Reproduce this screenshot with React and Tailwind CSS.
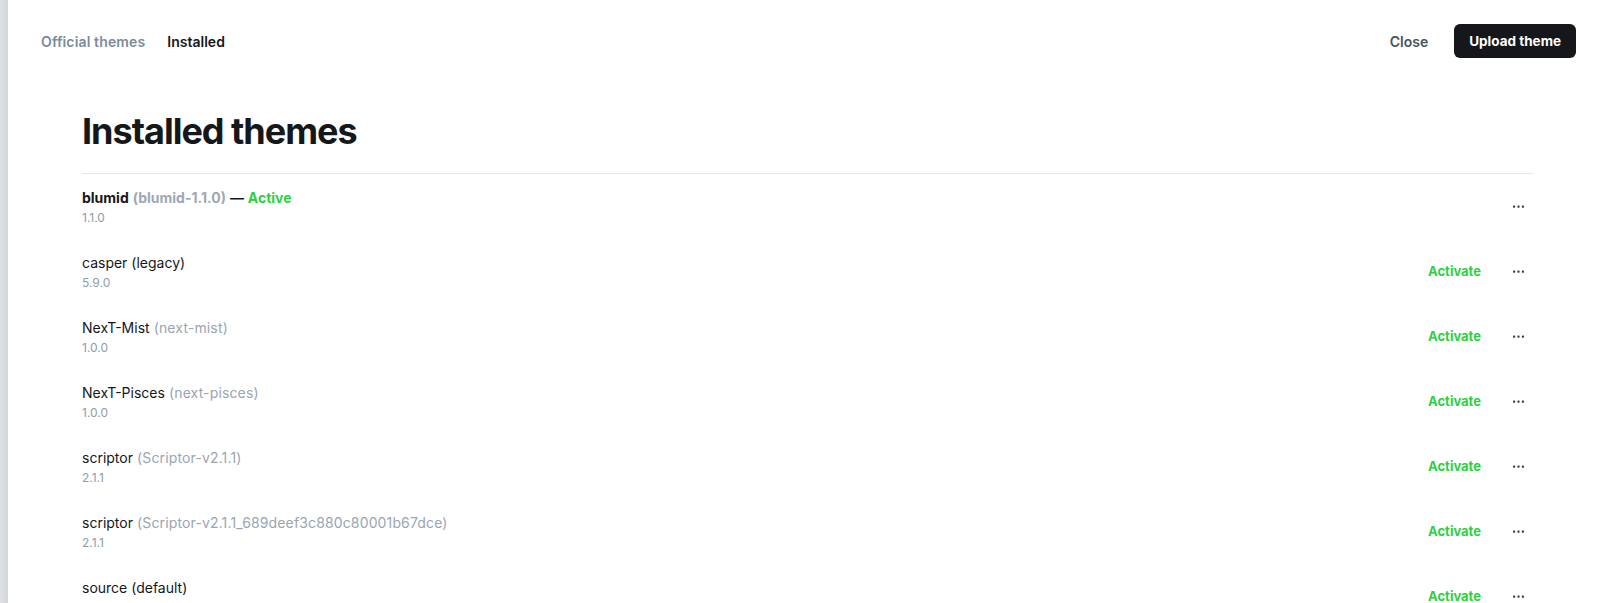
import React from "react";

const themes = [
  { name: "blumid", slug: "blumid-1.1.0", version: "1.1.0", active: true },
  { name: "casper (legacy)", version: "5.9.0" },
  { name: "NexT-Mist", slug: "next-mist", version: "1.0.0" },
  { name: "NexT-Pisces", slug: "next-pisces", version: "1.0.0" },
  { name: "scriptor", slug: "Scriptor-v2.1.1", version: "2.1.1" },
  { name: "scriptor", slug: "Scriptor-v2.1.1_689deef3c880c80001b67dce", version: "2.1.1" },
  { name: "source (default)", version: "1.5.0" },
];

const Dots = () => (
  <svg width="11" height="3" viewBox="0 0 11 3" fill="#394047">
    <rect x="0" y="0.5" width="2.2" height="2.2" rx="0.6" />
    <rect x="4.4" y="0.5" width="2.2" height="2.2" rx="0.6" />
    <rect x="8.8" y="0.5" width="2.2" height="2.2" rx="0.6" />
  </svg>
);

const ThemeRow = ({ theme }) => (
  <div className="h-[65px] flex items-center justify-between">
    <div className="flex flex-col">
      <div className="text-[14px] leading-[20px] text-[#15171a]">
        {theme.active ? (
          <>
            <span className="font-bold">{theme.name}</span>{" "}
            <span className="font-bold text-[#9ea8b3]">({theme.slug})</span>{" "}
            <span className="font-semibold">—</span>{" "}
            <span className="font-bold text-[#30cf43]">Active</span>
          </>
        ) : (
          <>
            {theme.name}
            {theme.slug && (
              <span className="text-[#9aa5b1] tracking-[0.01em]"> ({theme.slug})</span>
            )}
          </>
        )}
      </div>
      <div className="mt-[1px] text-[12px] leading-[17px] text-[#8e9cac]">{theme.version}</div>
    </div>
    <div className="flex items-center">
      {!theme.active && (
        <button className="text-[13px] font-bold text-[#30cf43] mr-[22px]">Activate</button>
      )}
      <button className="w-[30px] h-[24px] flex items-center justify-center">
        <Dots />
      </button>
    </div>
  </div>
);

export default function App() {
  return (
    <div
      className="flex h-[603px] overflow-hidden bg-white"
      style={{ fontFamily: "Inter, 'Noto Sans', sans-serif" }}
    >
      <div className="w-[8px] shrink-0 bg-gradient-to-r from-[#dfe1e4] to-[#d2d5d9]" />
      <div className="flex-1 flex flex-col">
        {/* Header */}
        <div className="h-[82px] shrink-0 flex items-center justify-between pl-[33px] pr-[23px]">
          <div className="flex items-center gap-[22px] text-[14px]">
            <span className="font-semibold text-[#7c8b9a] tracking-[0.01em]">Official themes</span>
            <span className="font-semibold text-[#15171a]">Installed</span>
          </div>
          <div className="flex items-center gap-[26px]">
            <button className="text-[14px] font-semibold text-[#4a525a]">Close</button>
            <button className="h-[34px] px-[15px] rounded-md bg-[#15171a] text-white text-[13.5px] font-bold">
              Upload theme
            </button>
          </div>
        </div>

        {/* Content */}
        <div className="pl-[74px] pr-[66px]">
          <div className="pt-[28px] pb-[20px] border-b border-[#e6e9eb]">
            <h1 className="text-[36px] leading-[43px] font-bold tracking-[-0.028em] text-[#15171a]">
              Installed themes
            </h1>
          </div>
          <div className="flex flex-col">
            {themes.map((t, i) => (
              <ThemeRow key={i} theme={t} />
            ))}
          </div>
        </div>
      </div>
    </div>
  );
}
